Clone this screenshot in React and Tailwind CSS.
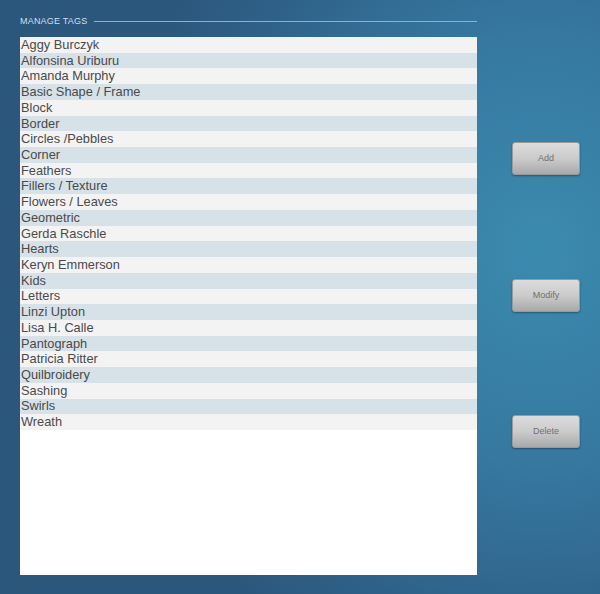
import React from "react";

const tags = [
  "Aggy Burczyk","Alfonsina Uriburu","Amanda Murphy","Basic Shape / Frame","Block","Border","Circles /Pebbles","Corner","Feathers","Fillers / Texture","Flowers / Leaves","Geometric","Gerda Raschle","Hearts","Keryn Emmerson","Kids","Letters","Linzi Upton","Lisa H. Calle","Pantograph","Patricia Ritter","Quilbroidery","Sashing","Swirls","Wreath",
];

function Btn({ label }) {
  return (
    <button className="w-[68px] h-[33px] rounded-[3px] border border-[#9a9a9a] bg-gradient-to-b from-[#dcdcdc] via-[#cbcbcb] to-[#a9a9a9] text-[9px] text-[#707070] shadow-[0_1px_2px_rgba(0,0,0,0.35)] [font-family:'Liberation_Sans',Arial,sans-serif]">
      {label}
    </button>
  );
}

export default function App() {
  return (
    <div
      className="w-[600px] h-[594px] overflow-hidden flex [font-family:'Liberation_Sans',Arial,sans-serif]"
      style={{ background: "radial-gradient(ellipse 420px 480px at 540px 250px, #3b8bae 0%, #3678a0 45%, #2f6188 80%, #2c577d 100%)" }}
    >
      <div className="w-[477px] pl-[20px] pt-[15px] flex flex-col">
        <div className="flex items-center h-[12px] gap-[7px]">
          <span className="text-[9px] text-[#d3dfe8] tracking-[0.2px] leading-none">MANAGE TAGS</span>
          <div className="flex-1 h-px bg-[#98adbf]" />
        </div>
        <div className="mt-[10px] h-[538px] bg-white flex flex-col">
          {tags.map((t, i) => (
            <div
              key={t}
              className={`h-[15.72px] flex items-center pl-[1px] pt-[1px] text-[12.8px] leading-none text-[#4a4a4a] ${i % 2 === 0 ? "bg-[#f3f3f3]" : "bg-[#d6e1e8]"}`}
            >
              {t}
            </div>
          ))}
        </div>
      </div>
      <div className="flex-1 flex flex-col pl-[35px] pt-[142px] gap-[104px]">
        <Btn label="Add" />
        <Btn label="Modify" />
        <div className="-mt-[1px]">
          <Btn label="Delete" />
        </div>
      </div>
    </div>
  );
}
